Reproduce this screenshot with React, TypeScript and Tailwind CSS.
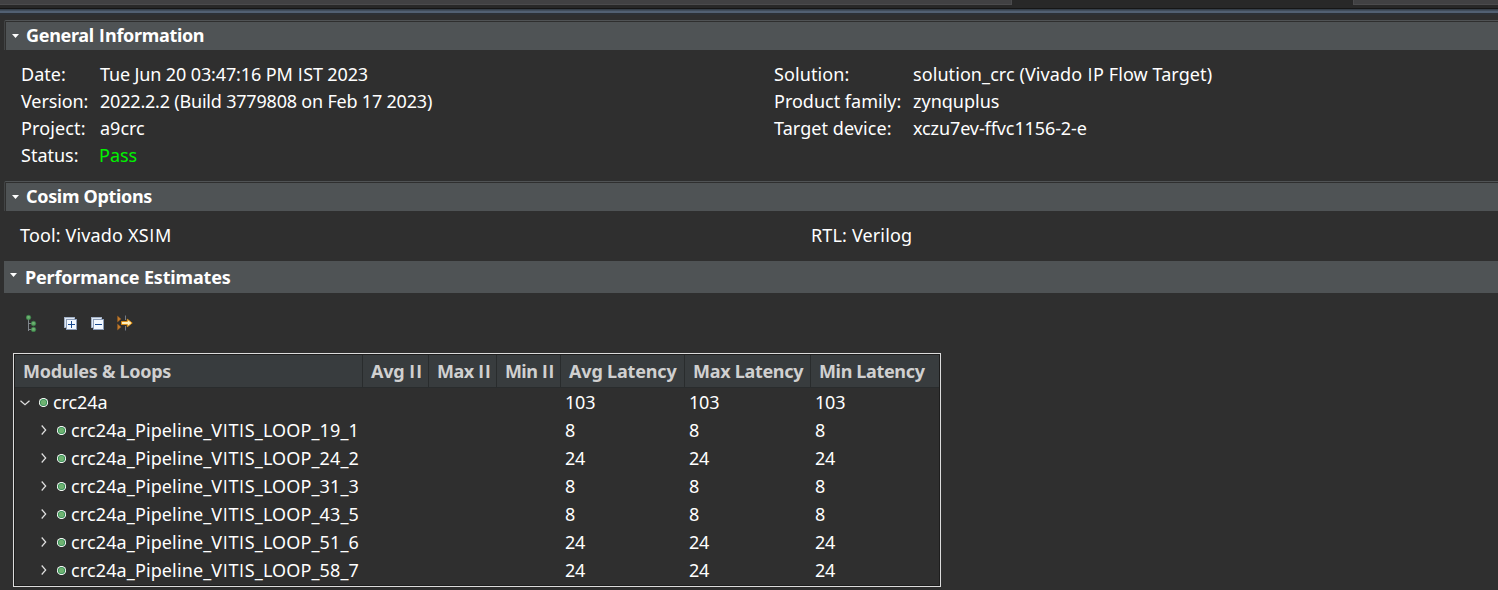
import React from "react";

type Pair = { label: string; value: string; labelCls?: string; valueCls?: string };

const left: Pair[] = [
  { label: "Date:", value: "Tue Jun 20 03:47:16 PM IST 2023", valueCls: "tracking-[-0.13px]" },
  { label: "Version:", value: "2022.2.2 (Build 3779808 on Feb 17 2023)", valueCls: "tracking-[-0.2px]", labelCls: "tracking-[-0.1px]" },
  { label: "Project:", value: "a9crc", labelCls: "tracking-[0.12px]" },
  { label: "Status:", value: "Pass", valueCls: "text-[#00f400] -ml-px" },
];

const right: Pair[] = [
  { label: "Solution:", value: "solution_crc (Vivado IP Flow Target)", labelCls: "tracking-[0.11px]", valueCls: "tracking-[0.08px]" },
  { label: "Product family:", value: "zynquplus" },
  { label: "Target device:", value: "xczu7ev-ffvc1156-2-e", labelCls: "tracking-[0.07px]", valueCls: "tracking-[-0.1px]" },
];

const columns = [
  { name: "Modules & Loops", cls: "tracking-[-0.28px]" },
  { name: "Avg II", cls: "tracking-[-0.3px]" },
  { name: "Max II", cls: "tracking-[-0.55px]" },
  { name: "Min II", cls: "tracking-[-0.6px]" },
  { name: "Avg Latency", cls: "tracking-[-0.17px]" },
  { name: "Max Latency", cls: "tracking-[-0.3px]" },
  { name: "Min Latency", cls: "tracking-[-0.35px]" },
];

const rows = [
  { name: "crc24a", latency: "103", root: true },
  { name: "crc24a_Pipeline_VITIS_LOOP_19_1", latency: "8", root: false },
  { name: "crc24a_Pipeline_VITIS_LOOP_24_2", latency: "24", root: false },
  { name: "crc24a_Pipeline_VITIS_LOOP_31_3", latency: "8", root: false },
  { name: "crc24a_Pipeline_VITIS_LOOP_43_5", latency: "8", root: false },
  { name: "crc24a_Pipeline_VITIS_LOOP_51_6", latency: "24", root: false },
  { name: "crc24a_Pipeline_VITIS_LOOP_58_7", latency: "24", root: false },
];

const grid = "grid grid-cols-[348px_66px_68px_64px_124px_126px_128px]";

/* Sets the capital I in a face that draws it as a plain stem, without serifs. */
function Label({ text, bold = false }: { text: string; bold?: boolean }) {
  const stem = bold
    ? "mx-[0.95px] font-['Roboto',sans-serif] leading-none"
    : "mx-[0.54px] font-['Open_Sans',sans-serif] leading-none";
  return (
    <>
      {text.split(/(I)/).map((part, i) =>
        part === "I" ? <span key={i} className={stem}>I</span> : part
      )}
    </>
  );
}

function Caret() {
  return (
    <svg width="7" height="4" viewBox="0 0 7 4" className="shrink-0">
      <path d="M0 0H7L3.5 4Z" fill="#fff" />
    </svg>
  );
}

function SectionBar({ title, cls }: { title: string; cls: string }) {
  return (
    <div className="ml-1 h-[30px] rounded-tl-[2px] border-t border-l border-t-[#505355] border-l-[#424445] pt-px pl-px">
      <div className="flex h-7 items-center bg-[#4f5355] pl-1.5">
        <Caret />
        <h2 className={`ml-[7px] h-7 font-bold leading-[26px] ${cls}`}><Label text={title} bold /></h2>
      </div>
    </div>
  );
}

function Ball() {
  return (
    <svg width="9" height="9" viewBox="0 0 9 9" className="mt-px shrink-0">
      <circle cx="4.5" cy="4.5" r="4.6" fill="#f3f8f3" />
      <circle cx="4.5" cy="4.5" r="3.6" fill="#2f8a52" />
      <circle cx="4.5" cy="4.5" r="2.7" fill="#6fb271" />
    </svg>
  );
}

function Chevron({ open }: { open: boolean }) {
  return open ? (
    <svg width="10" height="6" viewBox="0 0 10 6" className="mt-px shrink-0">
      <path d="M0.5 0.7L5 4.8L9.5 0.7" fill="none" stroke="#e0e0e0" strokeWidth="1.2" />
    </svg>
  ) : (
    <svg width="6" height="10" viewBox="0 0 6 10" className="shrink-0">
      <path d="M0.7 0.5L4.7 5L0.7 9.5" fill="none" stroke="#e0e0e0" strokeWidth="1.2" />
    </svg>
  );
}

function TreeIcon() {
  return (
    <svg width="12" height="18" viewBox="0 0 12 18">
      <path d="M2.5 5V17M2.5 9.5H6M2.5 15.5H6" stroke="#80868c" fill="none" />
      <g fill="#5aa562" stroke="#3c8049" strokeWidth="0.7">
        <circle cx="2.5" cy="3.5" r="2.3" />
        <circle cx="7.5" cy="9.5" r="2.3" />
        <circle cx="7.5" cy="15.5" r="2.3" />
      </g>
      <path d="M1.5 3h2M6.5 9h2M6.5 15h2" stroke="#86bd84" />
    </svg>
  );
}

function FoldIcon({ plus }: { plus: boolean }) {
  return (
    <svg width="13" height="13" viewBox="0 0 13 13" shapeRendering="crispEdges">
      <rect x="0.5" y="0.5" width="10" height="10" fill="#dfe9f5" stroke="#a3b1c6" />
      <rect x="2.5" y="2.5" width="10" height="10" fill="#f2f8ff" stroke="#8c9db8" />
      <path d={plus ? "M4 7.5H11M7.5 4V11" : "M4 7.5H11"} stroke="#17498f" />
    </svg>
  );
}

function ExportIcon() {
  return (
    <svg width="16" height="16" viewBox="0 0 16 16">
      <path d="M0.5 1L4 4L0.5 7ZM0.5 9L4 12L0.5 15Z" fill="#c47c2c" stroke="#93591c" strokeWidth="0.5" />
      <path d="M8.5 0.5V5M8.5 11V15.5" stroke="#747b86" />
      <path d="M4.5 6.5H10.3V4.2L15.2 8L10.3 11.8V9.5H4.5Z" fill="#fff0bd" stroke="#d98c14" strokeWidth="1" />
    </svg>
  );
}

function Details({ items, cols }: { items: Pair[]; cols: string }) {
  return (
    <dl className={`grid ${cols} auto-rows-[27px] leading-[27px]`}>
      {items.map((p) => (
        <React.Fragment key={p.label}>
          <dt className={p.labelCls}>{p.label}</dt>
          <dd className={p.valueCls}><Label text={p.value} /></dd>
        </React.Fragment>
      ))}
    </dl>
  );
}

export default function App() {
  return (
    <div className="h-[590px] w-[1498px] overflow-hidden whitespace-nowrap bg-[#2f2f2f] font-['Noto_Sans',sans-serif] text-[18px] text-white">
      <div className="flex h-2 justify-between bg-[#282828]">
        <div className="h-[5px] w-[1012px] border-r border-b border-[#4b4b4d] bg-[#414143]" />
        <div className="h-[5px] w-[145px] border-b border-l border-[#4b4b4d] bg-[#414143]" />
      </div>
      <div className="h-px bg-[#161616]" />
      <div className="h-px bg-[#363f49]" />
      <div className="h-px bg-[#414d5b]" />
      <div className="h-0.5 bg-[#526072]" />
      <div className="mb-[5px] h-0.5 bg-[#2d3136]" />

      <SectionBar title="General Information" cls="tracking-[-0.32px]" />
      <div className="flex h-[131px] pt-[11px] pl-[21px]">
        <div className="w-[753px]">
          <Details items={left} cols="grid-cols-[79px_1fr]" />
        </div>
        <Details items={right} cols="grid-cols-[139px_1fr]" />
      </div>

      <SectionBar title="Cosim Options" cls="tracking-[-0.33px]" />
      <div className="flex h-[50px] pl-5 leading-[49px] tracking-[0.15px]">
        <div className="w-[791px]"><Label text="Tool: Vivado XSIM" /></div>
        <div>RTL: Verilog</div>
      </div>

      <div className="ml-1 flex h-8 items-center bg-[#4f5355] pl-1.5">
        <div className="pb-1"><Caret /></div>
        <h2 className="ml-2 font-bold leading-8 tracking-[-0.17px]">Performance Estimates</h2>
      </div>

      <div className="flex h-[60px] items-center pl-[26px]">
        <TreeIcon />
        <div className="ml-[26px]"><FoldIcon plus /></div>
        <div className="ml-[14px]"><FoldIcon plus={false} /></div>
        <div className="ml-[13px]"><ExportIcon /></div>
      </div>

      <div className="ml-[13px] h-[234px] w-[928px] border border-[#dcdcdc]">
        <div className="h-full border border-[#1d1d1d]">
          <div className={`${grid} h-[33px] border-b border-[#292c2d] bg-[#383c3e] font-bold leading-8 text-[#d0d0d0]`}>
            {columns.map((c, i) => (
              <div key={c.name} className={`border-[#292c2d] pl-2 ${i < 6 ? "border-r" : ""}`}>
                <span className={c.cls}><Label text={c.name} bold /></span>
              </div>
            ))}
          </div>
          {rows.map((r) => (
            <div key={r.name} className={`${grid} h-7 leading-7`}>
              <div className={`flex items-center ${r.root ? "pl-[5px]" : "pl-[26px]"}`}>
                <Chevron open={r.root} />
                <div className={r.root ? "ml-[9px]" : "ml-[10px]"}><Ball /></div>
                <span className={`ml-[5px] ${r.root ? "tracking-[-0.1px]" : "tracking-[0.12px]"}`}>
                  <Label text={r.name} />
                </span>
              </div>
              <div />
              <div />
              <div />
              <div className="pl-1 tracking-[-0.2px]">{r.latency}</div>
              <div className="pl-1 tracking-[-0.2px]">{r.latency}</div>
              <div className="pl-1 tracking-[-0.2px]">{r.latency}</div>
            </div>
          ))}
        </div>
      </div>
    </div>
  );
}
